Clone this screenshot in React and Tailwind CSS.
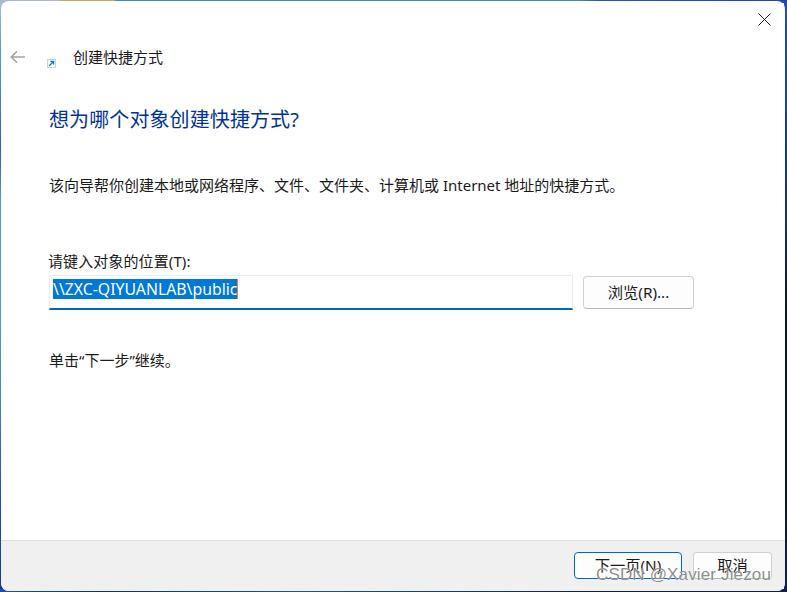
const sans = 'font-["Noto_Sans","Noto_Sans_CJK_SC",sans-serif]'

// wallpaper peeking out round the window, one strip per side
const wallpaper =
  '[background:linear-gradient(90deg,#a8bccc_0,#a8bccc_60px,#c8a860_62px,#c8a860_114px,#3f88c0_116px,#3f88c0_580px,#1f58b8_600px,#2048b0_100%)_0_0/100%_3px_no-repeat,linear-gradient(90deg,#1d4fb0_0,#0f2f60_100px,#1a5a80_300px,#0f2040_600px,#0f1f50_100%)_0_100%/100%_3px_no-repeat,linear-gradient(180deg,#a9c0d2_0,#4fa0c8_50px,#2b62c0_150px,#4b9cc0_200px,#4f9fc4_300px,#3f86c8_400px,#1f50b0_500px,#103a90_100%)_0_0/3px_100%_no-repeat,linear-gradient(180deg,#1a4fc0_0,#10367f_200px,#101830_300px,#101830_500px,#0c2060_100%)_100%_0/3px_100%_no-repeat,#fff]'

function BackArrow() {
  return (
    <svg width="16" height="14" viewBox="0 0 16 14" fill="none" stroke="#a3a3a3" strokeWidth="1.6">
      <path d="M15 7H1.5M7 1.3 1.3 7 7 12.7" />
    </svg>
  )
}

function ShortcutIcon() {
  return (
    <svg width="9" height="9" viewBox="0 0 9 9" fill="none">
      <rect x="0.5" y="0.5" width="8" height="8" fill="#fdfdfd" stroke="#c9d3dc" />
      <path d="M2.2 6.8 6 3M3.4 2.4H6.6v3.2" stroke="#0a78d4" strokeWidth="1.3" />
    </svg>
  )
}

function CloseIcon() {
  return (
    <svg width="13" height="13" viewBox="0 0 13 13" fill="none" stroke="#1a1a1a" strokeWidth="1">
      <path d="M.5.5l12 12M12.5.5l-12 12" />
    </svg>
  )
}

function Button({ children, primary, className }) {
  return (
    <button
      className={`flex items-center justify-center rounded-[4px] border bg-[#fdfdfd] text-[15.3px] leading-none text-[#1a1a1a] ${
        primary ? 'border-[#0067c0]' : 'border-[#d0d0d0] border-b-[#b8b8b8]'
      } ${className}`}
    >
      {children}
    </button>
  )
}

export default function App() {
  return (
    <div className={`relative h-[592px] w-[787px] overflow-hidden p-[1px] pr-[2px] ${wallpaper} ${sans}`}>
      <div className="flex h-full flex-col overflow-hidden rounded-[8px] bg-white">
        <div className="flex h-[36px] justify-end pr-[14px] pt-[12px]">
          <CloseIcon />
        </div>

        <div className="flex flex-1 flex-col">
          <div className="flex h-[40px] items-center pl-[9px]">
            <BackArrow />
            <div className="ml-[21px] mt-[12px] flex">
              <ShortcutIcon />
            </div>
            <span className="ml-[17px] text-[15px] leading-none text-[#1a1a1a]">创建快捷方式</span>
          </div>

          <div className="flex flex-col pl-[48px]">
            <h1 className="mt-[29px] text-[20px] leading-[28px] font-normal tracking-[0.1px] text-[#003399]">想为哪个对象创建快捷方式?</h1>
            <p className="mt-[40px] text-[15px] leading-[22px] text-[#1a1a1a]">该向导帮你创建本地或网络程序、文件、文件夹、计算机或 Internet 地址的快捷方式。</p>
            <label className="-ml-px mt-[54px] text-[15px] leading-[22px] tracking-[0.1px] text-[#1a1a1a]">请键入对象的位置(T):</label>

            <div className="mt-[3px] flex items-start gap-[10px]">
              <div className="flex h-[35px] w-[524px] items-start border border-b-2 border-[#ececec] border-b-[#0067c0] pl-[3px] pt-[3px]">
                <span className="h-[20px] border-r border-[#f08020] bg-[#0078d7] text-[15.8px] leading-[20px] text-white">\\ZXC-QIYUANLAB\public</span>
              </div>
              <Button className="mt-px h-[33px] w-[111px]">浏览(R)...</Button>
            </div>

            <p className="mt-[39px] text-[15px] leading-[22px] text-[#1a1a1a]">单击“下一步”继续。</p>
          </div>
        </div>

        <div className="flex h-[51px] items-start justify-end gap-[11px] border-t border-[#dfdfdf] bg-[#f0f0f0] pr-[13px] pt-[11px]">
          <Button primary className="h-[27px] w-[108px]">下一页(N)</Button>
          <Button className="h-[27px] w-[79px]">取消</Button>
        </div>
      </div>

      <span className="absolute left-[596px] top-[565px] font-['Liberation_Sans',sans-serif] text-[17px] leading-[20px] tracking-[0.15px] text-[#808080]/90 [text-shadow:0_0_1px_#ffffff]">CSDN @Xavier Jiezou</span>
    </div>
  )
}
